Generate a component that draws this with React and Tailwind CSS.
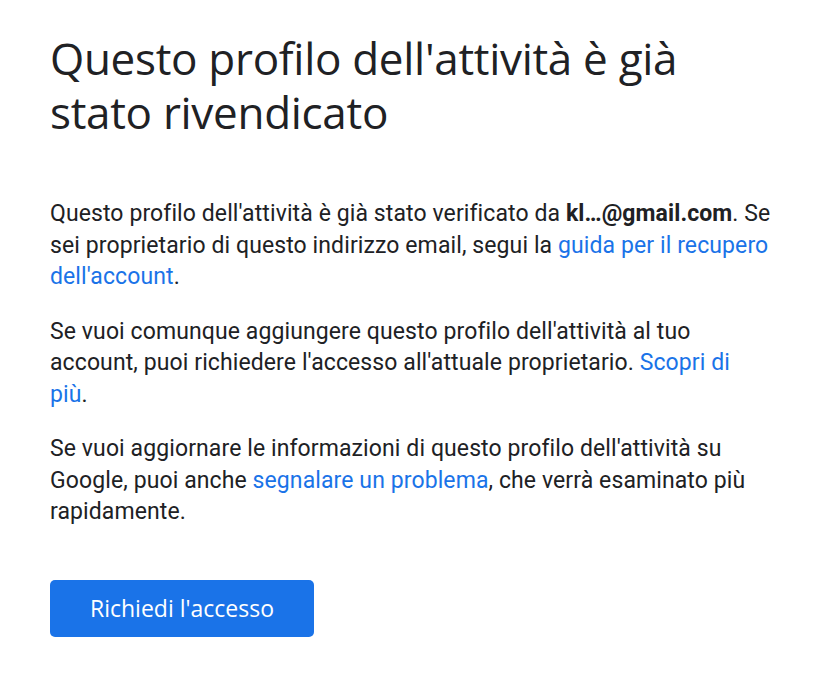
export default function App() {
  return (
    <div className="min-h-screen bg-white px-[50px] pt-[31px] text-[#202124]">
      <h1 className="font-['Open_Sans',sans-serif] text-[44px] font-normal leading-[54px] tracking-[-0.3px] text-[#202124]">
        Questo profilo dell'attività è già
        <br />
        stato rivendicato
      </h1>

      <div className="mt-[59px] max-w-[740px] font-['Roboto',sans-serif] text-[23px] leading-[31.5px] tracking-[0.1px]">
        <p className="mb-[23px]">
          Questo profilo dell'attività è già stato verificato da{" "}
          <span className="font-bold">kl…@gmail.com</span>. Se
          <br />
          sei proprietario di questo indirizzo email, segui la{" "}
          <a className="text-[#1a73e8]">
            guida per il recupero
            <br />
            dell'account
          </a>
          .
        </p>
        <p className="mb-[23px]">
          Se vuoi comunque aggiungere questo profilo dell'attività al tuo
          <br />
          account, puoi richiedere l'accesso all'attuale proprietario.{" "}
          <a className="text-[#1a73e8]">
            Scopri di
            <br />
            più
          </a>
          .
        </p>
        <p>
          Se vuoi aggiornare le informazioni di questo profilo dell'attività su
          <br />
          Google, puoi anche <a className="text-[#1a73e8]">segnalare un problema</a>, che verrà
          esaminato più
          <br />
          rapidamente.
        </p>
      </div>

      <button className="mt-[52px] flex h-[57px] w-[264px] items-center justify-center rounded-[5px] bg-[#1a73e8] font-['Open_Sans',sans-serif] text-[23px] font-medium text-white">
        Richiedi l'accesso
      </button>
    </div>
  );
}
